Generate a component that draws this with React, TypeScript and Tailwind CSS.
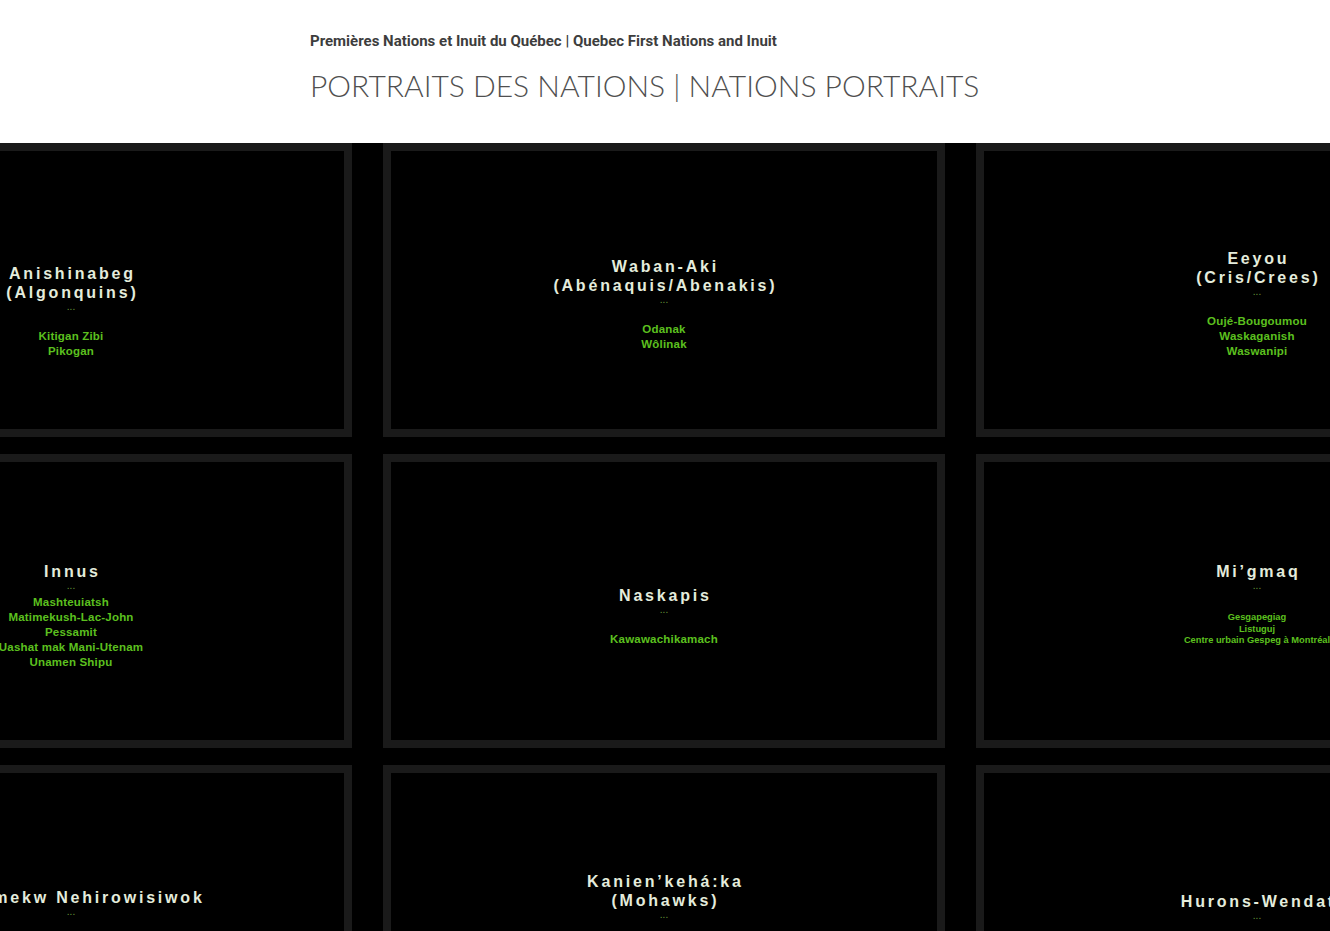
import React from 'react';

type Nation = {
  title: string[];
  places: string[];
  pt: string;
  gap: string;
  small?: boolean;
};

const nations: Nation[] = [
  { title: ['Anishinabeg', '(Algonquins)'], places: ['Kitigan Zibi', 'Pikogan'], pt: 'pt-[113px]', gap: 'mt-[15px]' },
  { title: ['Waban-Aki', '(Abénaquis/Abenakis)'], places: ['Odanak', 'Wôlinak'], pt: 'pt-[106px]', gap: 'mt-[15px]' },
  { title: ['Eeyou', '(Cris/Crees)'], places: ['Oujé-Bougoumou', 'Waskaganish', 'Waswanipi'], pt: 'pt-[98px]', gap: 'mt-[15px]' },
  {
    title: ['Innus'],
    places: ['Mashteuiatsh', 'Matimekush-Lac-John', 'Pessamit', 'Uashat mak Mani-Utenam', 'Unamen Shipu'],
    pt: 'pt-[100px]',
    gap: 'mt-[2px]',
  },
  { title: ['Naskapis'], places: ['Kawawachikamach'], pt: 'pt-[124px]', gap: 'mt-[15px]' },
  {
    title: ['Mi’gmaq'],
    places: ['Gesgapegiag', 'Listuguj', 'Centre urbain Gespeg à Montréal'],
    pt: 'pt-[100px]',
    gap: 'mt-[19px]',
    small: true,
  },
  { title: ['Atikamekw Nehirowisiwok'], places: ['Manawan', 'Opitciwan', 'Wemotaci'], pt: 'pt-[115px]', gap: 'mt-[15px]' },
  { title: ['Kanien’kehá:ka', '(Mohawks)'], places: ['Akwesasne', 'Kahnawake', 'Kanesatake'], pt: 'pt-[99px]', gap: 'mt-[15px]' },
  { title: ['Hurons-Wendat'], places: ['Wendake'], pt: 'pt-[119px]', gap: 'mt-[15px]' },
];

function NationCard({ nation }: { nation: Nation }) {
  return (
    <div className="h-[294px] border-8 border-[#1a1a1a] bg-black">
      <div className={`flex flex-col items-center text-center font-['Liberation_Sans',Arial,sans-serif] ${nation.pt}`}>
        <div className="pl-[2.8px] text-[16px] leading-[19px] font-bold tracking-[2.8px] text-[#e4ecdc] whitespace-nowrap">
          {nation.title.map((line) => (
            <div key={line}>{line}</div>
          ))}
        </div>
        <div className="mt-[-2px] h-[14px] text-[10px] leading-[14px] text-[#679a3a]">...</div>
        <div className={`${nation.gap} font-bold text-[#5cc01f] whitespace-nowrap`}>
          {nation.places.map((p) => (
            <div key={p} className={nation.small ? 'text-[9.3px] leading-[11.5px]' : 'text-[11.5px] leading-[15px] tracking-[0.2px]'}>
              {p}
            </div>
          ))}
        </div>
      </div>
    </div>
  );
}

export default function App() {
  return (
    <div className="min-h-screen bg-black">
      <header className="h-[143px] bg-white">
        <div className="mx-auto w-[710px] pt-[32px]">
          <p className="font-['Roboto',sans-serif] text-[15px] leading-[18px] font-bold text-[#3d3d3d]">
            Premières Nations et Inuit du Québec | Quebec First Nations and Inuit
          </p>
          <h1 className="mt-[17px] font-['Lato',sans-serif] text-[30px] leading-[36px] font-light text-[#505050]">
            PORTRAITS DES NATIONS | NATIONS PORTRAITS
          </h1>
        </div>
      </header>
      <main className="overflow-hidden">
        <div className="ml-[-210px] grid w-[1748px] grid-cols-[562px_562px_562px] gap-x-[31px] gap-y-[17px]">
          {nations.map((n) => (
            <NationCard key={n.title[0]} nation={n} />
          ))}
        </div>
      </main>
    </div>
  );
}
